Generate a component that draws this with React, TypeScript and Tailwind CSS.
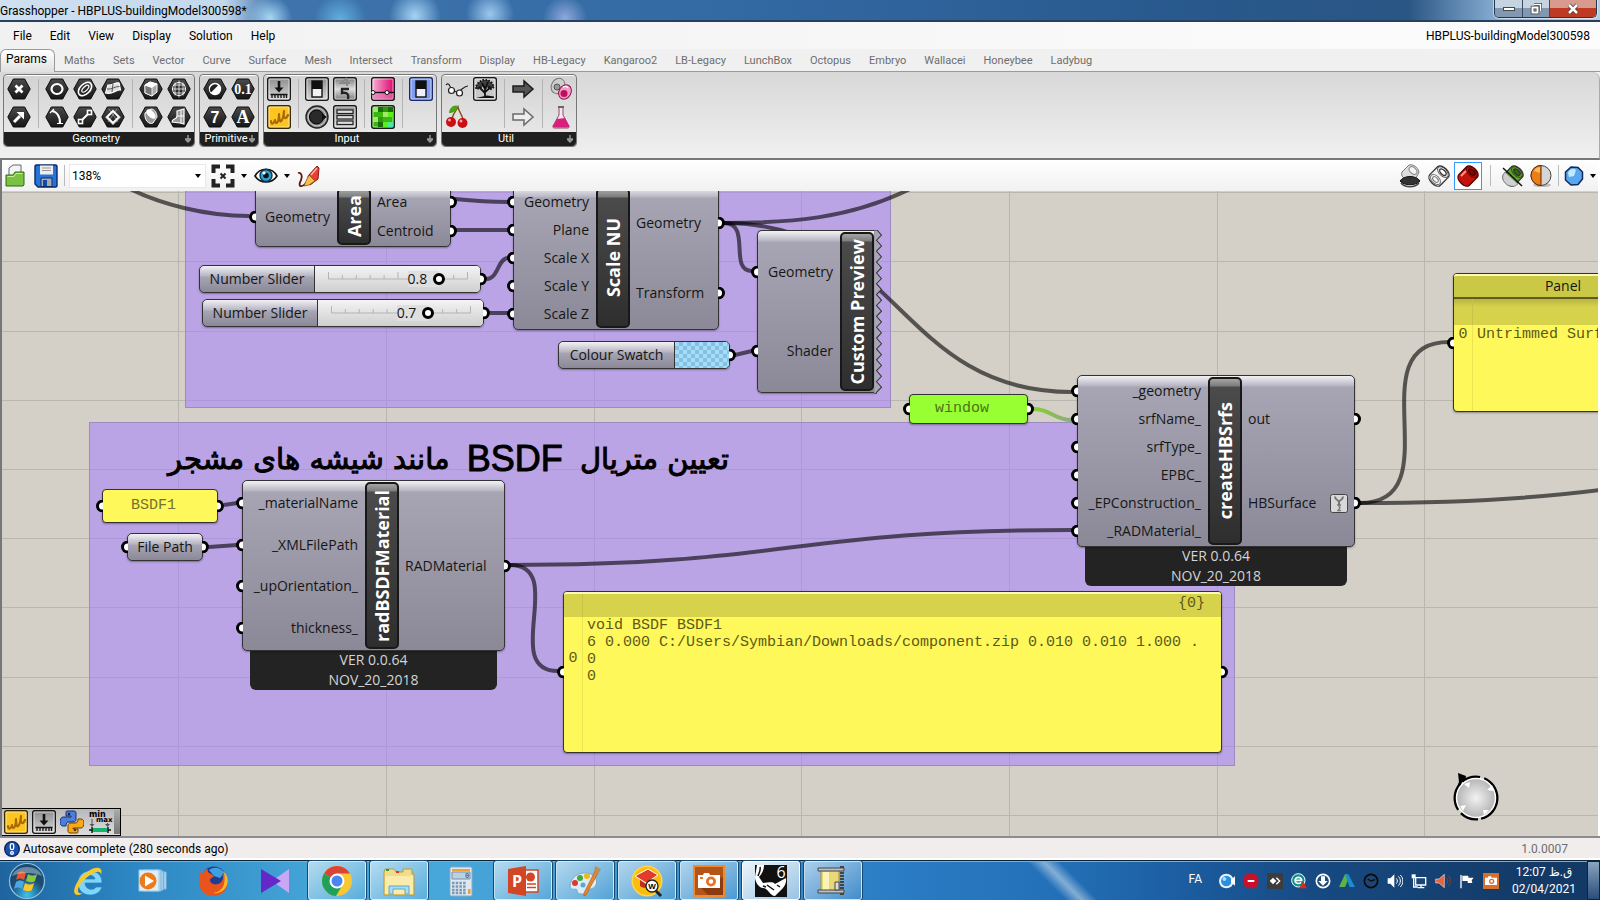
import { ReactNode } from "react";
import clsx from "clsx";

const TABS = [
  "Maths",
  "Sets",
  "Vector",
  "Curve",
  "Surface",
  "Mesh",
  "Intersect",
  "Transform",
  "Display",
  "HB-Legacy",
  "Kangaroo2",
  "LB-Legacy",
  "LunchBox",
  "Octopus",
  "Embryo",
  "Wallacei",
  "Honeybee",
  "Ladybug",
];

const GRID_X = [178, 386, 594, 801, 1009, 1217, 1424];
const GRID_Y = [1, 70, 140, 209, 278, 347, 416, 486, 555, 624];

const WIRES = [
  "M128 -3C160 13 205 25 249 25",
  "M455 8C475 10 485 11 508 11",
  "M456 39H508",
  "M487 88C498 88 498 67 508 67",
  "M490 122H508",
  "M735 164L752 160",
  "M724 32C790 32 850 28 912 -3",
  "M724 32C752 32 728 80 752 80",
  "M724 32C898 32 898 201 1072 201",
  "M1360 312C1454 312 1355 151 1449 151",
  "M1360 312C1450 312 1530 308 1600 299",
  "M224 314L237 312",
  "M209 356L237 354",
  "M510 374C790 374 790 339 1072 339",
  "M510 374C568 374 500 480 558 480",
];

type IconProps = {
  children: ReactNode;
  size?: string;
};

function Svg({ children, size = "size-6" }: IconProps) {
  return (
    <svg viewBox="0 0 24 24" className={clsx(size, "shrink-0")} aria-hidden>
      {children}
    </svg>
  );
}

function Hex({ children }: { children: ReactNode }) {
  return (
    <Svg>
      <path
        d="M.8 12 6.3 2h11.4l5.5 10-5.5 10H6.3z"
        fill="url(#hex)"
        stroke="#0c0c0c"
        strokeWidth="1"
      />
      <g fill="none" stroke="#fff" strokeWidth="1.6">
        {children}
      </g>
    </Svg>
  );
}

function Tile({
  children,
  fill = "url(#silver)",
  stroke = "#1a1a1a",
}: {
  children: ReactNode;
  fill?: string;
  stroke?: string;
}) {
  return (
    <Svg>
      <rect
        x=".7"
        y=".7"
        width="22.6"
        height="22.6"
        rx="2"
        fill={fill}
        stroke={stroke}
        strokeWidth="1.4"
      />
      <rect
        x="2"
        y="2"
        width="20"
        height="20"
        rx="1"
        fill="none"
        stroke="#fff"
        strokeOpacity=".6"
      />
      {children}
    </Svg>
  );
}

function HexText({ text, size }: { text: string; size: number }) {
  return (
    <text
      x="12"
      y={12 + size * 0.36}
      fontSize={size}
      fontFamily="Liberation Serif, serif"
      fontWeight="700"
      textAnchor="middle"
      fill="#fff"
      stroke="none"
    >
      {text}
    </text>
  );
}

const sketchTile = (
  <Tile fill="#fdc51d" stroke="#3a2c00">
    <path
      d="M4 16c0 4 3 3 4-1 0 5 4 4 4-6 0 12 4 8 5-3-1 8 2 9 4 4"
      fill="none"
      stroke="#a86a08"
      strokeWidth="2.200"
      strokeLinejoin="round"
      strokeLinecap="round"
    />
  </Tile>
);

const importTile = (
  <Tile>
    <path d="M12 4v8" stroke="#111" strokeWidth="2.6" />
    <path d="M7.500 10.500h9L12 15.500z" fill="#111" />
    <path
      d="M3.500 17.500h17M5 18v3M8 18v3M11 18v3M14 18v3M17 18v3M19.500 18v3"
      stroke="#111"
      strokeWidth="1.300"
    />
  </Tile>
);

// null leaves the slot empty, "|" starts a new block of columns
type Cell = ReactNode | null;
type Column = [string, Cell, string, Cell] | "|";

const geometry: Column[] = [
  [
    "Point",
    <Hex>
      <path d="m8.500 8.500 7 7m0-7-7 7" strokeWidth="2.800" />
    </Hex>,
    "Vector",
    <Hex>
      <path d="m7 17 6-6" strokeWidth="3" />
      <path d="M9.500 7H17v7.500z" fill="#fff" stroke="none" />
    </Hex>,
  ],
  "|",
  [
    "Circle",
    <Hex>
      <ellipse cx="12" cy="12" rx="5.500" ry="5" strokeWidth="2.200" />
    </Hex>,
    "Circular Arc",
    <Hex>
      <path d="M7 6c6 1 8 7 8 12" strokeWidth="2.200" />
      <path d="m5 8 4-4M12 18.500h6" strokeWidth="1.200" />
    </Hex>,
  ],
  [
    "Curve",
    <Hex>
      <g transform="rotate(-45 12 12)">
        <ellipse cx="12" cy="12" rx="8" ry="5" />
        <ellipse cx="12.500" cy="12" rx="4.500" ry="2" strokeWidth="1.200" />
      </g>
    </Hex>,
    "Line",
    <Hex>
      <path d="m8 16 8-8" strokeWidth="2" />
      <rect x="5.500" y="14.500" width="4" height="4" fill="#222" />
      <rect x="14.500" y="5.500" width="4" height="4" fill="#222" />
    </Hex>,
  ],
  [
    "Surface",
    <Hex>
      <path d="M4.500 16 7 8c4 1 7-3 11-2l1.500 7c-4-1-8 5-15 3z" fill="#ddd" strokeWidth="1.200" />
      <path d="m12 6.500-1 8.500M6 12c5 1 8-3 12.500-2.500" stroke="#555" strokeWidth="1" />
    </Hex>,
    "Twisted Box",
    <Hex>
      <path d="m12 6 6 6-6 6-6-6z" strokeWidth="2" />
      <path d="m8 4 9 13M16 4 7 17M4 12l8 8M20 12l-8 8" strokeWidth=".6" strokeOpacity=".7" />
    </Hex>,
  ],
  "|",
  [
    "Box",
    <Hex>
      <path d="m6 8 5-3 7 2v8l-5 4-7-3z" fill="#aaa" strokeWidth="1" />
      <path d="m6 8 7 2.500v8.500l-7-3z" fill="#777" strokeWidth=".8" />
      <path d="m6 8 5-3 7 2-5 3.500z" fill="#fff" strokeWidth=".8" />
    </Hex>,
    "Brep",
    <Hex>
      <path d="m6 8 6-4c4 0 6 5 6 8l-4 6c-4 2-9-3-8-10z" fill="#999" strokeWidth="1" />
      <ellipse cx="12" cy="9" rx="3" ry="5.500" fill="#fff" transform="rotate(-45 12 9)" strokeWidth=".6" />
    </Hex>,
  ],
  [
    "Mesh",
    <Hex>
      <circle cx="12" cy="12" r="6.500" strokeWidth="1" />
      <path
        d="M12 3.500v17M5 12h14M8 5.500v13M16 5.500v13M6 8h12M6 16h12"
        strokeWidth=".9"
        strokeOpacity=".85"
      />
    </Hex>,
    "Brep",
    <Hex>
      <path d="m10 6 7-2v15l-4-1-8-1c0-4 5-2 5-6z" fill="#999" strokeWidth="1.200" />
      <path d="M14 5v13M10 11h7" strokeWidth="1" />
    </Hex>,
  ],
];

const primitive: Column[] = [
  [
    "Boolean",
    <Hex>
      <circle cx="12" cy="12" r="5.500" fill="#fff" strokeWidth="1.400" />
      <path d="M8 15.500A5 5 0 0 1 15 8.500z" fill="#222" stroke="none" />
    </Hex>,
    "Integer",
    <Hex>
      <text
        x="12"
        y="18"
        fontSize="16"
        fontFamily="Liberation Sans, sans-serif"
        fontWeight="700"
        textAnchor="middle"
        fill="#fff"
        stroke="none"
      >
        7
      </text>
    </Hex>,
  ],
  [
    "Number",
    <Hex>
      <HexText text="0.1" size={14} />
    </Hex>,
    "Text",
    <Hex>
      <HexText text="A" size={18} />
    </Hex>,
  ],
];

const inputs: Column[] = [
  ["Import", importTile, "Sketch", sketchTile],
  "|",
  [
    "Button",
    <Tile>
      <rect x="7" y="4" width="10" height="16" fill="#f2f2f2" stroke="#111" strokeWidth="1.400" />
      <rect x="7" y="4" width="10" height="8" fill="#111" />
    </Tile>,
    "Control Knob",
    <Svg>
      <circle cx="12" cy="12" r="11" fill="#8a8a8a" stroke="#222" strokeWidth="1.400" />
      <circle cx="12" cy="12" r="9" fill="none" stroke="#ccc" strokeWidth="1" />
      <circle cx="11.500" cy="12" r="7" fill="#2a2a2a" stroke="#000" />
      <path d="m17 8.500 5 3.500-5 3.500z" fill="#111" />
    </Svg>,
  ],
  [
    "Digit Scroller",
    <Tile fill="url(#scroll)">
      <path d="M14 1 8 6h9M14 1v8" fill="none" stroke="#888" strokeWidth="2" />
      <path d="M16 12H9v4c6-1 7 2 6 6" fill="none" stroke="#222" strokeWidth="2.400" />
    </Tile>,
    "Value List",
    <Tile>
      {[5, 10.5, 16].map((y) => (
        <rect
          key={y}
          x="4"
          y={y}
          width="16"
          height="3.500"
          fill="#ddd"
          stroke="#222"
          strokeWidth="1.200"
        />
      ))}
    </Tile>,
  ],
  "|",
  [
    "Gradient",
    <Tile fill="url(#pink)">
      <path d="M1 15.500h22" stroke="#111" strokeWidth="1.400" />
      <rect x="2" y="16.500" width="20" height="6" fill="#e67ab4" opacity=".6" />
      <circle cx="2" cy="15.500" r="2" fill="#fff" stroke="#111" />
      <circle cx="16" cy="15.500" r="2" fill="#fff" stroke="#111" />
    </Tile>,
    "Image Sampler",
    <Tile fill="#3bb80f">
      <path d="M2 2h5v5H2zM12 7h5v5h-5zM2 12h5v5H2z" fill="#a4e86a" />
      <path d="M7 2h5v5H7zM17 2h5v5h-5zM7 17h5v5H7z" fill="#1a6e08" />
      <path d="M12 2h5v5h-5zM7 12h5v5H7z" fill="#2c9a0a" />
      <path d="M17 7h5v5h-5zM12 17h5v5h-5z" fill="#59f01a" />
      <path d="M17 17h5v5h-5z" fill="#4be8a4" />
    </Tile>,
  ],
  "|",
  [
    "Colour Swatch",
    <Tile fill="#7d9cf0" stroke="#1b2a66">
      <rect x="7" y="4" width="10" height="16" fill="#eef" stroke="#111" strokeWidth="1.400" />
      <rect x="7" y="4" width="10" height="8" fill="#111" />
    </Tile>,
    "",
    null,
  ],
];

const util: Column[] = [
  [
    "Jump",
    <Svg>
      <g fill="#fff" stroke="#222" strokeWidth="1.200">
        <path d="M1 8c2-3 4 0 5 4M14 14c3-1 5-5 9-5M9 14l3 1" fill="none" />
        <circle cx="6.500" cy="13.500" r="3" />
        <circle cx="14.500" cy="16" r="3" />
      </g>
    </Svg>,
    "Cherry Picker",
    <Svg>
      <path d="M7 14C8 8 12 5 13 2c1 5 4 8 5 12" fill="none" stroke="#7a4a12" strokeWidth="1.300" />
      <path d="M13 1C9-1 4 3 4 8c5 0 8-2 9-7z" fill="#47a51a" />
      <circle cx="6" cy="17" r="5" fill="#c90f14" />
      <circle cx="17.500" cy="18" r="5" fill="#c90f14" />
      <circle cx="4.500" cy="15" r="1.500" fill="#ff9c9c" />
      <circle cx="16" cy="16" r="1.500" fill="#ff9c9c" />
    </Svg>,
  ],
  [
    "Tree Statistics",
    <Tile fill="#c9c9c9">
      <path d="M3 21h18v-1.500l-7-1z" fill="#111" />
      <path d="M12 21v-9M12 16 6 10M12 15l6-5M12 12 9 6M12 12l3-7" stroke="#111" strokeWidth="1.800" />
      <path
        d="m3 9 3-4 4-2h5l4 3 2 4-3 2-2-2-3 1-3-2-3 2-4 1z"
        fill="#111"
        fillOpacity=".75"
        stroke="#111"
        strokeWidth="2"
        strokeDasharray="1.500 1.500"
      />
    </Tile>,
    "",
    null,
  ],
  "|",
  [
    "Relay",
    <Svg>
      <path d="M2 9h11V4l9 8-9 8v-5H2z" fill="#555" stroke="#1c1c1c" strokeWidth="1.500" />
    </Svg>,
    "Data",
    <Svg>
      <path d="M2 9h11V4l9 8-9 8v-5H2z" fill="#eee" stroke="#6a6a6a" strokeWidth="1.500" />
    </Svg>,
  ],
  "|",
  [
    "Suirify",
    <Svg>
      <ellipse cx="9" cy="9" rx="6.500" ry="8" transform="rotate(30 9 9)" fill="#cfcfcf" stroke="#777" />
      <circle cx="8" cy="10" r="3" fill="#999" stroke="#555" />
      <ellipse cx="16" cy="15" rx="6" ry="7.500" transform="rotate(30 16 15)" fill="#f09cc4" stroke="#8b1350" />
      <circle cx="15" cy="16.500" r="3.500" fill="#c00d5e" />
      <path d="M14 10c2-1 4-1 5 1" stroke="#fff" strokeWidth="1.400" fill="none" />
    </Svg>,
    "Galapagos",
    <Svg>
      <path d="M10 2h4v8l6 11c.5 1.500-.5 2-1.500 2h-13C4 23 3.500 22 4 21l6-11z" fill="#f6e6ee" stroke="#8d4a6b" />
      <path d="m8 14 8-1 4 8c.3 1-.3 1.400-1 1.400H5c-.8 0-1.300-.5-1-1.400z" fill="#d81f7d" />
      <path d="M9 2h6" stroke="#666" strokeWidth="2" />
    </Svg>,
  ],
];

function RibbonGroup({ title, columns }: { title: string; columns: Column[] }) {
  return (
    <section className="flex flex-col rounded-sm border border-[#777] bg-linear-to-b from-[#d2d2d2] to-[#ececec] shadow-[inset_0_1px_0_#fff]">
      <div className="flex flex-1 px-px">
        {columns.map((column, index) =>
          column === "|" ? (
            <div key={index} className="flex w-2.5 justify-center py-1">
              <div className="w-px bg-[#b4b4b4]" />
            </div>
          ) : (
            <div key={index} className="flex w-7 flex-col items-center">
              {column[1] && (
                <button type="button" aria-label={column[0]} className="flex h-7 items-center">
                  {column[1]}
                </button>
              )}
              {column[3] && (
                <button type="button" aria-label={column[2]} className="flex h-7 items-center">
                  {column[3]}
                </button>
              )}
            </div>
          )
        )}
      </div>
      <div className="flex h-3.5 items-center rounded-b-sm bg-[#1f1f1f] pr-0.5 pl-1 text-[11px] leading-3 text-white">
        <span className="flex-1 text-center">{title}</span>
        <svg viewBox="0 0 8 8" className="size-2" aria-hidden>
          <path d="M4 0v7M1.500 4.500 4 7l2.500-2.500M1 4h6" fill="none" stroke="#9a9a9a" strokeWidth="1.400" />
        </svg>
      </div>
    </section>
  );
}

function Port({ side }: { side: "in" | "out" }) {
  return (
    <span
      className={clsx(
        "absolute top-1/2 h-[13px] w-[7px] -translate-y-1/2 border-black bg-white",
        side === "in"
          ? "-left-[7px] rounded-l-full border-y-[3px] border-l-[3px]"
          : "-right-[7px] rounded-r-full border-y-[3px] border-r-[3px]"
      )}
    />
  );
}

const METAL =
  "border border-[#333] bg-[linear-gradient(#f2f2f4_0,#b6b5c3_10px,#a7a5b3_11px,#8b8997_100%)]";

type NodeProps = {
  name: string;
  inputs: string[];
  outputs: string[];
  place: string;
  inputWidth: string;
  footer?: boolean;
  ragged?: boolean;
  branch?: string;
};

function Node({ name, inputs, outputs, place, inputWidth, footer, ragged, branch }: NodeProps) {
  return (
    <article className={clsx("absolute", place)}>
      {footer && (
        <div className="absolute inset-x-2 top-full -mt-px flex flex-col items-center rounded-b-md bg-[#232323] text-[14px] leading-5 text-[#d4d4d4]">
          <span>VER 0.0.64</span>
          <span>NOV_20_2018</span>
        </div>
      )}
      <div
        className={clsx(
          "relative flex size-full rounded-[5px] py-px shadow-[0_1px_2px_rgba(0,0,0,.35)]",
          METAL,
          ragged && "rounded-r-none border-r-0"
        )}
      >
        <div className={clsx("flex flex-col", inputWidth)}>
          {inputs.map((label) => (
            <div key={label} className="relative flex flex-1 items-center justify-end pr-[7px]">
              <Port side="in" />
              {label}
            </div>
          ))}
        </div>
        <div className="flex w-[34px] items-center justify-center rounded-[5px] border-2 border-[#181818] bg-[linear-gradient(#a5a5a5_0,#7c7c7c_7px,#4b4b4b_8px,#2e2e2e_100%)]">
          <h2 className="rotate-180 text-[18px] leading-6 font-bold whitespace-nowrap text-white [writing-mode:vertical-rl]">
            {name}
          </h2>
        </div>
        <div className="flex flex-1 flex-col">
          {outputs.map((label) => (
            <div key={label} className="relative flex flex-1 items-center justify-between px-1.5">
              <Port side="out" />
              {label}
              {label === branch && (
                <svg viewBox="0 0 18 19" className="h-[19px] w-[18px]" aria-hidden>
                  <rect x=".5" y=".5" width="17" height="18" rx="2" fill="#d8d8d8" stroke="#444" />
                  <path d="M5 2.500c0 4 4 3 4 6 0-3 4-2 4-6M9 8v3" fill="none" stroke="#777" strokeWidth="2" />
                  <path d="M11 11H8l2 2.500-2 3h3" fill="none" stroke="#777" strokeWidth="1.300" />
                </svg>
              )}
            </div>
          ))}
        </div>
        {ragged && (
          <svg
            viewBox="0 0 8 160"
            preserveAspectRatio="none"
            className="absolute -top-px -right-[7px] h-[164px] w-2"
            aria-hidden
          >
            <path
              d={`M0 0H3${Array.from({ length: 15 })
                .map((_, i) => `L7.500 ${i * 10.6 + 5}L2.500 ${i * 10.6 + 10}`)
                .join("")}L2 160H0z`}
              fill="#a9a7b5"
              stroke="#333"
              strokeWidth="1"
            />
            <path d="M0 1v158" stroke="#9a98a6" strokeWidth="2" />
          </svg>
        )}
      </div>
    </article>
  );
}

function NumberSlider({ value, place }: { value: number; place: string }) {
  return (
    <label
      className={clsx(
        "absolute flex h-7 w-[282px] rounded-[5px] shadow-[0_1px_2px_rgba(0,0,0,.35)]",
        METAL,
        place
      )}
    >
      <span className="flex w-[115px] items-center justify-center border-r border-[#333]">
        Number Slider
      </span>
      <span className="relative flex flex-1 items-center rounded-r bg-linear-to-b from-[#f4f4f4] to-[#cfcfcf] pl-[7px]">
        <svg viewBox="0 0 151 26" className="absolute h-[26px] w-[151px]" aria-hidden>
          <path
            d="M6.500 6v7h139V6M20.400 9v4M34.300 9v4M48.200 9v4M62.100 9v4M76 6v7M89.900 9v4M103.800 9v4M117.700 9v4M131.600 9v4"
            fill="none"
            stroke="#b4b4b4"
          />
        </svg>
        <span className="relative flex w-[151px] items-center">
          <span
            className="absolute bg-[#dfdfdf] pr-3 leading-4"
            style={{ right: (1 - value) * 139 + 6 }}
          >
            {value}
          </span>
          <input
            type="range"
            min={0}
            max={1}
            step={0.1}
            defaultValue={value}
            className="relative h-4 w-full appearance-none bg-transparent [&::-webkit-slider-thumb]:size-3 [&::-webkit-slider-thumb]:appearance-none [&::-webkit-slider-thumb]:rounded-full [&::-webkit-slider-thumb]:border-3 [&::-webkit-slider-thumb]:border-black [&::-webkit-slider-thumb]:bg-white"
          />
        </span>
      </span>
      <Port side="out" />
    </label>
  );
}

function Canvas() {
  return (
    <main className="relative min-h-[645px] flex-1 overflow-hidden border-x-2 border-l-[#77767a] border-r-white bg-[#d4d0c8] font-['Open_Sans',sans-serif] text-[14px] leading-5 text-[#161616]">
      <div className="absolute inset-y-0 -left-0.5 w-[1600px]">
        <svg className="absolute inset-0 size-full" aria-hidden>
          {GRID_X.map((x) => (
            <path key={x} d={`M${x + 0.5} 0V2000`} stroke="#b9b6ae" />
          ))}
          {GRID_Y.map((y) => (
            <path key={y} d={`M0 ${y + 0.5}H1600`} stroke="#b9b6ae" />
          ))}
        </svg>
        <div className="absolute -top-1 left-[185px] h-[221px] w-[706px] border border-[#9c8bc0] bg-[#a680ff]/55" />
        <div className="absolute top-[231px] left-[89px] h-[344px] w-[1146px] border border-[#9c8bc0] bg-[#a680ff]/55" />
        <svg className="absolute inset-0 size-full" fill="none" aria-hidden>
          <defs>
            <linearGradient id="greenWire">
              <stop offset="0" stopColor="#86cf2c" />
              <stop offset="1" stopColor="#8fa983" />
            </linearGradient>
          </defs>
          {WIRES.map((d) => (
            <path key={d} d={d} stroke="#000" strokeOpacity=".6" strokeWidth="4" />
          ))}
          <path d="M1033 218C1052 218 1053 229 1072 229" stroke="url(#greenWire)" strokeWidth="4" />
        </svg>

        <h1
          dir="rtl"
          className="absolute top-[248px] left-[168px] flex w-[561px] items-center justify-between font-['DejaVu_Sans',sans-serif] text-[29px] leading-10 whitespace-nowrap text-black [-webkit-text-stroke:1px_black]"
        >
          <span>تعیین متریال</span>
          <span className="font-['Liberation_Sans',sans-serif] text-[36px]">BSDF</span>
          <span>مانند شیشه های مشجر</span>
        </h1>

        <Node
          name="Area"
          inputs={["Geometry"]}
          outputs={["Area", "Centroid"]}
          place="-top-[5px] left-[255px] h-[61px] w-[196px]"
          inputWidth="w-[81px]"
        />
        <Node
          name="Scale NU"
          inputs={["Geometry", "Plane", "Scale X", "Scale Y", "Scale Z"]}
          outputs={["Geometry", "Transform"]}
          place="-top-[5px] left-[513px] h-[144px] w-[206px]"
          inputWidth="w-[82px]"
        />
        <NumberSlider value={0.8} place="top-[74px] left-[199px]" />
        <NumberSlider value={0.7} place="top-[108px] left-[202px]" />
        <div
          className={clsx(
            "absolute top-[150px] left-[558px] flex h-7 w-[172px] rounded-[5px] shadow-[0_1px_2px_rgba(0,0,0,.35)]",
            METAL
          )}
        >
          <span className="flex w-[116px] items-center justify-center border-r border-[#333]">
            Colour Swatch
          </span>
          <span className="flex-1 rounded-r bg-[repeating-conic-gradient(#86c0e0_0_25%,#a4dcfa_0_50%)] bg-size-[8px_8px]" />
          <Port side="out" />
        </div>
        <Node
          name="Custom Preview"
          inputs={["Geometry", "Shader"]}
          outputs={[]}
          place="top-[39px] left-[757px] h-[163px] w-[118px]"
          inputWidth="w-[82px]"
          ragged
        />
        <div className="absolute top-[203px] left-[909px] h-[30px] w-[119px] rounded-[4px] border border-[#333] bg-[#98ff32] pt-0.5 pl-[25px] font-['Liberation_Mono',monospace] text-[15px] leading-6 text-[#4c7418] shadow-[0_1px_2px_rgba(0,0,0,.35)]">
          <Port side="in" />
          window
          <Port side="out" />
        </div>
        <div className="absolute top-[298px] left-[102px] h-[34px] w-[116px] rounded-[4px] border border-[#333] bg-[#fff85a] pt-0.5 pl-7 font-['Liberation_Mono',monospace] text-[15px] leading-7 text-[#75712c] shadow-[0_1px_2px_rgba(0,0,0,.35)]">
          <Port side="in" />
          BSDF1
          <Port side="out" />
        </div>
        <div
          className={clsx(
            "absolute top-[342px] left-[127px] flex h-7 w-[76px] items-center justify-center rounded-[5px] shadow-[0_1px_2px_rgba(0,0,0,.35)]",
            METAL
          )}
        >
          <Port side="in" />
          File Path
          <Port side="out" />
        </div>
        <Node
          name="radBSDFMaterial"
          inputs={["_materialName", "_XMLFilePath", "_upOrientation_", "thickness_"]}
          outputs={["RADMaterial"]}
          place="top-[289px] left-[242px] h-[171px] w-[263px]"
          inputWidth="w-[122px]"
          footer
        />

        <section className="absolute top-[400px] left-[563px] flex h-[162px] w-[659px] flex-col rounded-[4px] border border-[#333] bg-[#fff85a] font-['Liberation_Mono',monospace] text-[15px] leading-[17px] text-[#5c5818] shadow-[0_1px_2px_rgba(0,0,0,.35)]">
          <Port side="in" />
          <Port side="out" />
          <div className="flex h-[25px] rounded-t-[3px] border-t-2 border-[#fbf9b8] bg-[#d7d24c]">
            <div className="w-[19px] border-r border-[#c9c447]" />
            <div className="flex-1 pt-px pr-4 text-right">{"{0}"}</div>
          </div>
          <div className="flex flex-1">
            <div className="flex w-[19px] flex-col justify-start border-r border-[#ece551] pt-[33px] text-center">
              0
            </div>
            <pre className="pl-1 font-[inherit] leading-[17px]">
              {"void BSDF BSDF1\n6 0.000 C:/Users/Symbian/Downloads/component.zip 0.010 0.010 1.000 .\n0\n0"}
            </pre>
          </div>
        </section>

        <Node
          name="createHBSrfs"
          inputs={["_geometry", "srfName_", "srfType_", "EPBC_", "_EPConstruction_", "_RADMaterial_"]}
          outputs={["out", "HBSurface"]}
          place="top-[184px] left-[1077px] h-[172px] w-[278px]"
          inputWidth="w-[130px]"
          branch="HBSurface"
          footer
        />

        <section className="absolute top-[82px] left-[1453px] flex h-[139px] w-[220px] flex-col rounded-[4px] border border-[#333] bg-[#fff85a] shadow-[0_1px_2px_rgba(0,0,0,.35)]">
          <Port side="in" />
          <h2 className="rounded-t-[3px] border-t-2 border-b-2 border-t-[#fbf9b8] border-b-[#5d5b20] bg-[#cbc846] pb-0.5 text-center leading-[19px]">
            Panel
          </h2>
          <div className="flex h-[26px] bg-linear-to-b from-[#b7b340] to-[#d7d24c] to-30%">
            <div className="w-[19px] border-r border-[#c9c447]" />
          </div>
          <div className="flex flex-1 font-['Liberation_Mono',monospace] text-[15px] text-[#5c5818]">
            <div className="w-[19px] border-r border-[#ece551] text-center">0</div>
            <div className="pl-1 whitespace-nowrap">Untrimmed Surface</div>
          </div>
        </section>
      </div>

      <svg viewBox="0 0 52 52" className="absolute right-24 bottom-3 size-[52px]" aria-hidden>
        <circle cx="26" cy="26" r="20.500" fill="none" stroke="#000" strokeWidth="4" strokeDasharray="27 3 18 4" />
        <path d="m8 1 8 3-1 6H9z" />
        <path d="m12 6-3 8" stroke="#000" strokeWidth="3" />
        <circle cx="26" cy="26" r="19.500" fill="url(#dial)" stroke="#fff" strokeWidth="1.500" />
        <path d="m14 12 6-2-1 6zM37 18l5-5 2 6zM10 34l6-1-3 6zM33 38h6l-5 5z" fill="#fff" />
      </svg>

      <div className="absolute bottom-0 left-0 flex h-7 border border-l-0 border-black bg-linear-to-b from-[#b8b8b8] to-[#dcdcdc] pl-0.5">
        <button type="button" aria-label="Sketch" className="flex w-7 items-center">
          {sketchTile}
        </button>
        <button type="button" aria-label="Import" className="flex w-7 items-center">
          {importTile}
        </button>
        <button type="button" aria-label="Python" className="flex w-7 items-center">
          <Svg>
            <path
              d="M7 1h7c1.500 0 2 1 2 2v6c0 2-1 3-3 3H9c-2 0-3 1-3 4H3c-2 0-3-2-3-4s1-5 3-5h8V6H6V3c0-1 0-2 1-2z"
              fill="#4a7fe0"
              stroke="#1b2f66"
            />
            <path
              d="M17 23h-7c-1.500 0-2-1-2-2v-5c0-2 1-3 3-3h4c2 0 3-1 3-4h3c2 0 3 2 3 4s-1 5-3 5h-8v1h5v2c0 1 0 2-1 2z"
              fill="#f9a818"
              stroke="#6b3f00"
            />
            <circle cx="9" cy="4" r="1.200" fill="#0d1f4d" />
            <circle cx="15" cy="20" r="1.200" fill="#5a3200" />
          </Svg>
        </button>
        <button type="button" aria-label="Min max" className="flex w-6 items-center">
          <svg viewBox="0 0 24 24" className="size-6 overflow-visible">
            <text x="1" y="7" fontSize="8" fontWeight="700" fontFamily="DejaVu Sans, sans-serif">
              min
            </text>
            <text x="8" y="12" fontSize="7" fontWeight="700" fontFamily="DejaVu Sans, sans-serif">
              max
            </text>
            <path d="M4 9v6M19.500 13v3" stroke="#555" />
            <path d="M1.500 14h5L4 17zM17 14h5l-2.500 3z" fill="#555" />
            <path d="M4 18h15.500v4H4z" fill="#12b36c" />
            <path d="M4 17v6M20 17v6M1 20h3M20 20h3" stroke="#111" strokeWidth="1.400" />
          </svg>
        </button>
        <div className="my-px ml-0.5 w-1.5 bg-linear-to-b from-[#aaa] to-[#777]" />
      </div>
    </main>
  );
}

function Caret() {
  return <span className="border-x-3 border-t-4 border-x-transparent border-t-black" />;
}

function Roll({ body, hole, line = "#333" }: { body: string; hole: string; line?: string }) {
  return (
    <g stroke={line} strokeWidth="1.300" transform="rotate(45 12 12)">
      <path d="M4.500 6.500v11c0 6 15 6 15 0v-11c0-6-15-6-15 0z" fill={body} />
      <ellipse cx="12" cy="6.500" rx="6.500" ry="3.800" fill={body} strokeWidth=".8" />
      <ellipse cx="12" cy="6.500" rx="4" ry="2.200" fill={hole} />
    </g>
  );
}

function Toolbar() {
  return (
    <div className="flex h-[31px] shrink-0 items-center border-x-2 border-l-[#77767a] border-r-white bg-linear-to-b from-white to-[#f1f1f1] pr-0.5 pl-px">
      <button type="button" aria-label="Open File" className="flex w-6 justify-center">
        <Svg>
          <path d="M6 9V4l4-3h8v13H6z" fill="#f4f4f4" stroke="#666" />
          <path d="M3 22V11h7l2-3h9v13l-1 1z" fill="#7cc242" stroke="#2e6b10" />
          <path d="M4.500 12.500H11l2-3h6.500" stroke="#c9f09c" fill="none" />
        </Svg>
      </button>
      <button type="button" aria-label="Save File" className="ml-[7px] flex w-6 justify-center">
        <Svg>
          <path d="M2 1h20l1 1v20l-1 1H4l-3-3V2z" fill="#2674d9" stroke="#0b2a66" strokeWidth="1.400" />
          <path d="M6 1.500h13v9H6z" fill="#eee" />
          <path d="M8 4h9M8 6.500h9" stroke="#999" />
          <path d="M7 14h11v8.500H7z" fill="#aaa" stroke="#0b2a66" />
          <path d="M9 16h4v6H9z" fill="#0f4aa8" />
        </Svg>
      </button>
      <div className="mx-[5px] ml-[6px] h-[21px] w-px bg-[#bbb]" />
      <label className="flex h-[22px] w-[135px] items-center bg-white pr-1 text-[12px] shadow-[0_0_0_1px_#e6e9ee]">
        <select aria-label="Zoom" className="flex-1 appearance-none pl-0.5 outline-none">
          <option>138%</option>
        </select>
        <Caret />
      </label>
      <button type="button" aria-label="Zoom Extents" className="ml-1.5 flex items-center gap-1.5">
        <Svg>
          <path d="M2.500 9V2.500H9M15 2.500h6.500V9M21.500 15v6.500H15M9 21.500H2.500V15" fill="none" stroke="#222" strokeWidth="4" />
          <path d="m9.500 9.500 5 5m0-5-5 5" stroke="#222" strokeWidth="2" />
        </Svg>
        <Caret />
      </button>
      <button type="button" aria-label="Named Views" className="ml-[7px] flex items-center gap-1.5">
        <Svg>
          <path d="M1 12c5-9 17-9 22 0-5 8-17 8-22 0z" fill="#fff" stroke="#111" strokeWidth="1.600" />
          <circle cx="12" cy="11.500" r="6" fill="#2a9fd0" stroke="#0d3550" strokeWidth="1.400" />
          <circle cx="12" cy="11.500" r="2.800" fill="#111" />
          <circle cx="10" cy="9" r="1.600" fill="#fff" />
        </Svg>
        <Caret />
      </button>
      <button type="button" aria-label="Sketch" className="ml-1.5">
        <Svg>
          <path d="M2 9c3-1 5 3 3 7s-2 7 1 6 4-4 6-3 3 0 4-1" fill="none" stroke="#5c1a10" strokeWidth="1.800" />
          <path d="m12 12 9-10 2 2-1 11-8 6z" fill="#e8402c" stroke="#8b1410" />
          <path d="m10 17 3-6 6 6-6 4-5 1z" fill="#f5c04a" stroke="#7b3a10" strokeWidth=".7" />
          <path d="m15 11 6-7" stroke="#ffb0a4" strokeWidth="1.500" />
        </Svg>
      </button>

      <div className="ml-auto flex items-center">
        <button type="button" aria-label="No preview" className="flex w-7 justify-center">
          <Svg>
            <path d="M4 8 11 1c4-1 9 2 10 7l-3 6H6c-2-1-3-4-2-6z" fill="#ddd" stroke="#777" />
            <ellipse cx="15" cy="6.500" rx="3" ry="4.500" transform="rotate(-45 15 6.500)" fill="#f5f5f5" stroke="#888" />
            <path d="M2 17c4-6 16-6 20 0-4 5-16 5-20 0z" fill="#333" stroke="#111" />
            <path d="M3 19c4 5 14 5 18 0" stroke="#444" strokeWidth="1.500" fill="none" />
          </Svg>
        </button>
        <button type="button" aria-label="Wireframe preview" className="ml-px flex w-7 justify-center">
          <Svg>
            <Roll body="#f6f6f6" hole="#fff" />
            <g transform="rotate(45 12 12)" fill="none" stroke="#777">
              <ellipse cx="12" cy="17" rx="6" ry="3.800" />
              <ellipse cx="12" cy="17" rx="3.500" ry="2" />
            </g>
          </Svg>
        </button>
        <button
          type="button"
          aria-label="Shaded preview"
          aria-pressed="true"
          className="ml-px flex size-7 items-center justify-center border border-[#3399ff] bg-white"
        >
          <Svg>
            <Roll body="#c4130c" hole="#7d0804" line="#4a0603" />
            <path d="m5 12 5-5" stroke="#f59a92" strokeWidth="2" />
          </Svg>
        </button>
        <div className="mx-2 h-[21px] w-px bg-[#bbb]" />
        <button type="button" aria-label="Selected preview" className="flex w-7 justify-center">
          <Svg>
            <Roll body="#58a81a" hole="#2c6c08" />
            <path d="m4 8 13 12-3 2C7 24 0 17 2 11z" fill="#d0d0d0" stroke="#777" strokeWidth=".8" />
            <path d="m2 4 19 18" stroke="#111" strokeWidth="1.500" />
          </Svg>
        </button>
        <button type="button" aria-label="Document preview" className="flex w-7 justify-center">
          <Svg>
            <ellipse cx="13" cy="21" rx="9" ry="2" fill="#bbb" />
            <circle cx="12" cy="11.500" r="10" fill="#d5d5d5" stroke="#444" />
            <path d="M12 1.500a10 10 0 0 0 0 20z" fill="#e8801a" stroke="#6b2300" />
            <path d="M5 7c1-2 3-4 6-4v6z" fill="#ffb85a" />
          </Svg>
        </button>
        <div className="mx-[3px] h-[21px] w-px bg-[#bbb]" />
        <button type="button" aria-label="Preview quality" className="flex items-center gap-1">
          <Svg>
            <path d="m9 3 7 .5 4.500 4.500v7L16 20.500l-7 .5-5.500-5V8z" fill="#57a8f0" stroke="#12285c" strokeWidth="1.500" />
            <path d="M6 9c1-4 6-5 8-3l-2 6-5 1z" fill="#c4e8ff" />
          </Svg>
          <Caret />
        </button>
      </div>
    </div>
  );
}

type Task = {
  name: string;
  look: "plain" | "open" | "active";
  icon: ReactNode;
};

const TASKS: Task[] = [
  {
    name: "Internet Explorer",
    look: "plain",
    icon: (
      <>
        <path d="M29 18H12c0 7 9 8 11 4h6c-2 6-7 8-12 8-7 0-12-5-12-12S10 6 17 6c8 0 12 5 12 12zm-7-4c-1-5-9-5-10 0z" fill="#7fd6fa" stroke="#1e86c9" strokeWidth=".7" />
        <path d="M28 10c3-9-6-9-14-3C4 14-1 25 2 29c2 2 5 1 8-1-8 2-6-7 2-14C20 7 28 4 28 10z" fill="#f8c92a" />
      </>
    ),
  },
  {
    name: "Media Player",
    look: "plain",
    icon: (
      <>
        <path d="M8 5h18v21H8zM26 6h2v19h-2zM29 7h2v17h-2z" fill="#bfe0f5" stroke="#86bbdf" />
        <path d="M4 5h20v21H4z" fill="#dbeefa" stroke="#9cc8e8" />
        <circle cx="13" cy="16" r="8.500" fill="#ef7a1a" />
        <path d="m10 10.500 9 5.500-9 5.500z" fill="#fff" />
      </>
    ),
  },
  {
    name: "Firefox",
    look: "plain",
    icon: (
      <>
        <circle cx="17" cy="14" r="12.500" fill="#1c3f94" />
        <path d="M12 5c5-4 13-2 15 3l-4 5-6-2z" fill="#3fa0e0" />
        <path d="M3 7c1 1 2 1 3 1 1-2 3-4 5-4-1 2 0 4 3 5l3 2c-1 2-4 2-4 4 0 4 6 6 10 3 3-2 4-6 2-10 5 4 6 9 5 13-2 7-8 10-14 10C8 31 2 25 2 17c0-4 1-7 1-10z" fill="#e8541c" />
        <path d="M26 6c5 4 6 11 3 16-3 5-9 7-13 6 6-1 10-4 11-9 1-5 1-9-1-13z" fill="#fbb928" />
      </>
    ),
  },
  {
    name: "KMPlayer",
    look: "plain",
    icon: (
      <>
        <path d="M30 4v24l-17-12z" fill="#c8a8f5" />
        <path d="M2 4v24l20-12z" fill="#6427c8" />
      </>
    ),
  },
  {
    name: "Chrome",
    look: "open",
    icon: (
      <>
        <circle cx="16" cy="16" r="15" fill="#f9c831" />
        <path d="M16 16 3 8.500A15 15 0 0 1 29 8.500H16z" fill="#da4335" />
        <path d="M3 8.500A15 15 0 0 0 15 31l7-12-6-3z" fill="#1fa15b" />
        <circle cx="16" cy="16" r="7.500" fill="#fff" />
        <circle cx="16" cy="16" r="5.500" fill="#4a86ee" />
      </>
    ),
  },
  {
    name: "Explorer",
    look: "open",
    icon: (
      <>
        <path d="M2 4h9l2 3h7V4h9v5h2v21H1V7z" fill="#f2dc88" stroke="#b99b3a" />
        <path d="M2 11h28v18H2z" fill="#faecab" />
        <path d="M3 4h3v2H3z" fill="#2c9a3a" />
        <path d="M13 6h3v2h-3z" fill="#d93a2a" />
        <path d="M6 29v-8h20v8h-4v-5H10v5z" fill="#a8dcf2" stroke="#5fa8cc" />
      </>
    ),
  },
  {
    name: "Calculator",
    look: "plain",
    icon: (
      <>
        <rect x="5" y="2" width="22" height="29" rx="1.500" fill="#dce8f2" stroke="#8fa8c0" />
        <path d="M7 4h18v2H7z" fill="#f0a030" />
        <path d="M7 7h18v7H7z" fill="#bcd0e2" stroke="#7890a8" />
        <text x="20" y="13" fontSize="7" fontFamily="Liberation Mono, monospace" fill="#234">0</text>
        {[18, 21.5, 25, 28].map((y) => (
          <path key={y} d={`M7 ${y}h14`} stroke="#7d98b4" strokeWidth="2.300" strokeDasharray="2.500 1.200" />
        ))}
        <path d="M23 24h2.500v5H23z" fill="#f0a030" />
      </>
    ),
  },
  {
    name: "PowerPoint",
    look: "open",
    icon: (
      <>
        <path d="M18 5h13v22H18z" fill="#fff" stroke="#d24625" strokeWidth="1.500" />
        <circle cx="23.500" cy="12" r="4.500" fill="#d24625" />
        <path d="M20 19h9M20 22.500h9" stroke="#d24625" strokeWidth="1.500" />
        <path d="M1 4 19 1v30L1 28z" fill="#d24625" />
        <text x="10" y="22" fontSize="16" fontWeight="700" fontFamily="Open Sans, sans-serif" textAnchor="middle" fill="#fff">P</text>
      </>
    ),
  },
  {
    name: "Paint",
    look: "open",
    icon: (
      <>
        <path d="M1 22C1 12 10 7 18 8c8 1 11 7 9 12-2 4-5 3-7 5-1 3-3 4-8 4-3 0-4-2-4-4s-7 1-7-3z" fill="#d9ecf8" stroke="#7aa8c8" />
        <circle cx="14" cy="20" r="2.500" fill="#5aa6da" />
        <circle cx="6" cy="18" r="3" fill="#d93a2a" />
        <circle cx="11" cy="13" r="3" fill="#48a83a" />
        <circle cx="18" cy="11" r="3" fill="#f2b81a" />
        <path d="m26 6 3 2-12 22-2 1 0-3z" fill="#e8862a" stroke="#a8540e" strokeWidth=".6" />
        <path d="m26 1 6 3-3 5-4-2z" fill="#b88e5c" />
      </>
    ),
  },
  {
    name: "Word Finder",
    look: "open",
    icon: (
      <>
        <circle cx="16" cy="16" r="15.500" fill="#ffd64a" />
        <circle cx="16" cy="16" r="14" fill="#fbbc0e" />
        <path d="m4 11 13-7 10 6-12 8z" fill="#e23b2e" stroke="#fff" />
        <path d="M9 15v6c3 3 9 2 12-1v-5l-6 4z" fill="#c42a20" />
        <circle cx="21" cy="21" r="6" fill="#fff" stroke="#222" strokeWidth="1.300" />
        <path d="m25 26 5 5" stroke="#222" strokeWidth="3" />
        <text x="21" y="24" fontSize="8" fontWeight="700" fontFamily="Liberation Sans, sans-serif" textAnchor="middle">W</text>
      </>
    ),
  },
  {
    name: "Snapshot",
    look: "open",
    icon: (
      <>
        <path d="M0 0h32v32H0z" fill="#f08a2c" />
        <path d="M2 2h28v28H2z" fill="#b3541a" />
        <path d="m6 21 9 9h15V12z" fill="#8a3c10" />
        <path d="M5 10h5l1-2h5l1 2h10v13H5z" fill="#fff" />
        <circle cx="18" cy="16.500" r="5" fill="#e4732a" />
        <circle cx="18" cy="16.500" r="2.200" fill="#fff" />
        <path d="M7 12h3v2H7z" fill="#e4732a" />
      </>
    ),
  },
  {
    name: "Rhino 6",
    look: "active",
    icon: (
      <>
        <path d="M0 0h32v32H0z" fill="#111" />
        <path d="M2 0h7c0 5-2 9-5 12l4 6c5 0 9-2 12 1l11-6c1 6-3 11-7 14l-4 4c-5 0-7-8-12-8C4 23 0 17 0 12z" fill="#fff" />
        <path d="M5 2c1 3-1 6-2 9M12 20l7 5M8 21l3 1M22 20l3 2" stroke="#111" strokeWidth="1.500" fill="none" />
        <text x="26" y="13" fontSize="16" fontFamily="Open Sans, sans-serif" textAnchor="middle" fill="#fff">6</text>
      </>
    ),
  },
  {
    name: "Archive",
    look: "open",
    icon: (
      <>
        <path d="M4 5h18v21H4z" fill="#e9d878" stroke="#a8923a" />
        <path d="M6 7h6v18H6z" fill="#faf3b4" />
        <path d="M25 1v29" stroke="#444" strokeWidth="4" strokeDasharray="2 1" />
        <path d="M1 3h26v3H1zM1 25h26v3H1z" fill="#b8c2cc" stroke="#444" />
        <path d="M18 17h4v8h-4z" fill="#ddd" stroke="#444" />
      </>
    ),
  },
];

const TRAY: [string, ReactNode][] = [
  [
    "Camera",
    <>
      <circle cx="11" cy="12" r="11" fill="#e8f4fc" />
      <circle cx="11" cy="12" r="8" fill="#2b8fe0" />
      <circle cx="8" cy="9" r="3" fill="#a8dcff" />
      <path d="m18 10 6-5v14l-6-5z" fill="#fff" />
    </>,
  ],
  [
    "Recorder",
    <>
      <rect x="1" y="1" width="22" height="22" rx="8" fill="#c8102a" />
      <path d="M7 12h10" stroke="#fff" strokeWidth="3" />
    </>,
  ],
  [
    "Remote",
    <>
      <path d="M0 0h24v24H0z" fill="#3c3c3c" />
      <path d="m9 7 5 5-5 5-5-5z" fill="#fff" />
      <path d="m14 7 5 5-5 5" stroke="#fff" strokeWidth="2" fill="none" />
    </>,
  ],
  [
    "Security",
    <>
      <circle cx="11" cy="11" r="10" fill="#0d8f8c" stroke="#fff" strokeWidth="1.500" />
      <path d="M6 11h10c0-6-10-6-10 0 0 5 6 6 9 3" fill="none" stroke="#fff" strokeWidth="2.400" />
      <path d="m18 13 6 10H12z" fill="#e0281e" />
    </>,
  ],
  [
    "Downloads",
    <>
      <circle cx="12" cy="12" r="10" fill="#1a4d7c" stroke="#fff" strokeWidth="2.500" />
      <path d="M9 5h6v7h4l-7 7-7-7h4z" fill="#fff" />
    </>,
  ],
  [
    "Autodesk",
    <>
      <path d="M0 21 9 2h4l2 5-6 14z" fill="#5eb346" />
      <path d="M9 2h5l10 19h-8z" fill="#1a8fd0" />
    </>,
  ],
  [
    "Clock",
    <>
      <circle cx="12" cy="12" r="10" fill="#1d4574" stroke="#0a0a0a" strokeWidth="2.500" />
      <path d="m7 9 5 3 6-2" stroke="#0a0a0a" strokeWidth="2" fill="none" />
    </>,
  ],
  [
    "Volume",
    <>
      <path d="M1 8h4l6-6v20l-6-6H1z" fill="#fff" />
      <path d="M14 8c2 2 2 6 0 8M17 5c4 4 4 10 0 14M20 3c5 5 5 13 0 18" stroke="#fff" strokeWidth="1.500" fill="none" />
    </>,
  ],
  [
    "Network",
    <>
      <path d="M7 7h15v11H7z" fill="#1d4574" stroke="#fff" strokeWidth="2" />
      <path d="M10 22h10M15 18v4M4 8v13h6" stroke="#fff" strokeWidth="2" fill="none" />
      <path d="M1 2h6v6H1z" fill="#fff" />
    </>,
  ],
  [
    "Sound Manager",
    <>
      <path d="M1 9h5l8-7v20l-8-7H1z" fill="#e8623a" stroke="#fff" strokeWidth=".8" />
      <path d="M17 7c3 3 3 7 0 10M20 4c4 4 4 12 0 16" stroke="#8a3c30" strokeWidth="1.500" fill="none" />
    </>,
  ],
  [
    "Action Center",
    <>
      <path d="M3 3v20" stroke="#fff" strokeWidth="2" />
      <path d="M5 4h9v3h8l-3 4 1 4h-7v-3H5z" fill="#fff" />
    </>,
  ],
  [
    "Snapshot",
    <>
      <path d="M0 0h24v24H0z" fill="#d8702c" />
      <path d="M3 7h4l1-2h4l1 2h8v11H3z" fill="#fff" />
      <circle cx="13" cy="12.500" r="3" fill="none" stroke="#d8702c" strokeWidth="2" />
    </>,
  ],
];

function Taskbar() {
  return (
    <footer className="flex h-10 shrink-0 items-stretch border-t border-[#0d2438] bg-[linear-gradient(45deg,transparent_65%,#ffffff70_66%,transparent_67%),linear-gradient(90deg,#1f649f_0,#2c86c2_8%,#45a5d8_20%,#47a6da_28%,#3d94d0_42%,#2a7cc4_56%,#2370b8_66%,#1b5da0_74%,#174a83_82%,#133a66_96%)] shadow-[inset_0_1px_0_#6db3dd]">
      <button type="button" aria-label="Start" className="flex w-[60px] items-center pl-2">
        <svg viewBox="0 0 38 38" className="size-[38px]" aria-hidden>
          <circle cx="19" cy="19" r="17.500" fill="url(#orb)" stroke="#8fc4e4" strokeWidth="1.200" />
          <path d="M10 11c3-2 5-2 8 0l-2 7c-3-2-5-2-8 0z" fill="#e8562a" />
          <path d="M20 12c3 2 6 2 9 0l-2 7c-3 2-6 1-9 0z" fill="#8cc63c" />
          <path d="M8 20c3-2 5-2 8 0l-2 7c-3-2-5-2-8 0z" fill="#4aa8e4" />
          <path d="M17 21c3 2 6 2 9 0l-2 7c-3 2-6 1-9 0z" fill="#fbc62a" />
          <path d="M4 14C8 2 30 2 34 14c-8-4-22-4-30 0z" fill="#fff" fillOpacity=".35" />
        </svg>
      </button>
      {TASKS.map(({ name, look, icon }) => (
        <button
          key={name}
          type="button"
          aria-label={name}
          className={clsx(
            "mr-1 flex w-[58px] items-center justify-center rounded-[3px] border",
            look === "plain" && "border-transparent",
            look === "open" &&
              "border-white/60 bg-linear-to-br from-white/60 to-white/10 shadow-[0_0_0_1px_#174a73]",
            look === "active" &&
              "border-white bg-linear-to-br from-white/90 to-white/50 shadow-[0_0_0_1px_#174a73]"
          )}
        >
          <svg viewBox="0 0 32 32" className="size-8 overflow-visible" aria-hidden>
            {icon}
          </svg>
        </button>
      ))}
      <div className="ml-auto flex items-center text-white">
        <span className="mr-[17px] mb-1 text-[12px]">FA</span>
        <div className="flex gap-2">
          {TRAY.map(([name, icon]) => (
            <button key={name} type="button" aria-label={name}>
              <Svg size="size-4">{icon}</Svg>
            </button>
          ))}
        </div>
        <div className="mr-2.5 ml-3 w-[66px] text-center text-[12px] leading-[17px]">
          <div dir="rtl" className="font-['Roboto','DejaVu_Sans',sans-serif]">
            ق.ظ 12:07
          </div>
          <div>02/04/2021</div>
        </div>
        <button
          type="button"
          aria-label="Show desktop"
          className="h-full w-[13px] border border-[#0b2440] bg-linear-to-b from-[#8aa4c0] to-[#2a4d78]"
        />
      </div>
    </footer>
  );
}

export default function App() {
  return (
    <div className="flex min-h-screen flex-col bg-[#f0f0f0] font-['Roboto',sans-serif] text-[12px] leading-4 text-black">
      <svg className="absolute size-0" aria-hidden>
        <defs>
          <linearGradient id="hex" x2="0" y2="1">
            <stop offset="0" stopColor="#4a4a4a" />
            <stop offset="1" stopColor="#161616" />
          </linearGradient>
          <linearGradient id="silver" x2="0" y2="1">
            <stop offset="0" stopColor="#8e8e8e" />
            <stop offset="1" stopColor="#d6d6d6" />
          </linearGradient>
          <linearGradient id="scroll" x2="0" y2="1">
            <stop offset="0" stopColor="#777" />
            <stop offset=".5" stopColor="#ddd" />
            <stop offset="1" stopColor="#777" />
          </linearGradient>
          <linearGradient id="pink">
            <stop offset="0" stopColor="#f7b3d6" />
            <stop offset="1" stopColor="#e0006e" />
          </linearGradient>
          <radialGradient id="dial">
            <stop offset="0" stopColor="#f2f2f2" />
            <stop offset="1" stopColor="#b5b5b5" />
          </radialGradient>
          <radialGradient id="orb" cy=".9">
            <stop offset="0" stopColor="#3cc4ee" />
            <stop offset="1" stopColor="#1b4a72" />
          </radialGradient>
        </defs>
      </svg>

      <header className="flex h-[22px] shrink-0 items-start justify-between border-b-2 border-[#27405e] bg-[radial-gradient(circle_at_270px_18px,#a8d8f4_0,transparent_22px),radial-gradient(circle_at_340px_20px,#62b0e0_0,transparent_26px),radial-gradient(circle_at_415px_16px,#a4d4f4_0,transparent_26px),radial-gradient(circle_at_490px_14px,#9cc8ee_0,transparent_24px),radial-gradient(circle_at_565px_18px,#8fa8dc_0,transparent_22px),linear-gradient(90deg,#cfe0f0_0,#c3d8ec_14%,#3f74ac_17%,#336aa4_45%,#28588c_75%,#2a5684_88%,#8fb4d8_94%,#b8cce0_100%)]">
        <h1 className="pt-[3px] text-[12px]">Grasshopper - HBPLUS-buildingModel300598*</h1>
        <div className="mr-[3px] flex h-[18px] w-[103px] overflow-hidden rounded-b-[5px] border border-t-0 border-[#26364a] shadow-[0_0_0_1px_#ffffff80]">
          <button
            type="button"
            aria-label="Minimize"
            className="flex w-7 items-center justify-center border-r border-[#3a4a5e] bg-linear-to-b from-[#c6d4e2] from-50% to-[#8298b0] to-50%"
          >
            <span className="h-1 w-3 border border-[#44484f] bg-white" />
          </button>
          <button
            type="button"
            aria-label="Restore"
            className="flex w-[27px] items-center justify-center border-r border-[#3a4a5e] bg-linear-to-b from-[#c6d4e2] from-50% to-[#8298b0] to-50%"
          >
            <svg viewBox="0 0 12 12" className="size-3" aria-hidden>
              <path d="M4 1.500h6.500V8" fill="none" stroke="#444" strokeWidth="3" />
              <path d="M4 1.500h6.500V8" fill="none" stroke="#fff" strokeWidth="1.500" />
              <path d="M2.500 4.500h5v5h-5z" fill="none" stroke="#444" strokeWidth="3.500" />
              <path d="M2.500 4.500h5v5h-5z" fill="none" stroke="#fff" strokeWidth="2" />
            </svg>
          </button>
          <button
            type="button"
            aria-label="Close"
            className="flex flex-1 items-center justify-center bg-linear-to-b from-[#d99a8e] from-45% to-[#bf3a22] to-50%"
          >
            <svg viewBox="0 0 12 12" className="size-3" aria-hidden>
              <path d="m2 2 8 8m0-8-8 8" stroke="#4a3a3a" strokeWidth="4" />
              <path d="m2 2 8 8m0-8-8 8" stroke="#fff" strokeWidth="2.500" />
            </svg>
          </button>
        </div>
      </header>

      <nav className="flex h-[27px] shrink-0 items-center justify-between bg-linear-to-r from-[#f1f1f1] to-[#fcfcfc] pr-2.5 pl-[13px]">
        <div className="flex gap-[18px]">
          {["File", "Edit", "View", "Display", "Solution", "Help"].map((item) => (
            <button key={item} type="button">
              {item}
            </button>
          ))}
        </div>
        <span>HBPLUS-buildingModel300598</span>
      </nav>

      <div className="flex h-[23px] shrink-0 items-end border-b border-[#9a9a9a] text-[11px] text-[#6e6e6e]">
        <button
          type="button"
          className="-mb-px h-[23px] w-[55px] rounded-t-md border border-b-0 border-[#9a9a9a] bg-linear-to-b from-white to-[#e0e0e0] pr-0.5 pb-1 text-[12px] text-black"
        >
          Params
        </button>
        {TABS.map((tab) => (
          <button key={tab} type="button" className="h-5 px-[9px]">
            {tab}
          </button>
        ))}
      </div>

      <div className="flex h-[88px] shrink-0 gap-1 rounded-tr-lg border-r border-b-2 border-r-[#aaa] border-b-[#77767a] bg-linear-to-b from-[#d8d8d8] to-[#f0f0f0] pt-0.5 pb-[11px] pl-[3px]">
        <RibbonGroup title="Geometry" columns={geometry} />
        <RibbonGroup title="Primitive" columns={primitive} />
        <RibbonGroup title="Input" columns={inputs} />
        <RibbonGroup title="Util" columns={util} />
      </div>

      <Toolbar />
      <Canvas />

      <div className="flex h-6 shrink-0 items-center justify-between border-t-2 border-b-2 border-t-[#8c8c90] border-b-white bg-[#f1edec] pt-0.5 pr-8 pl-1">
        <div className="flex items-center gap-[3px]">
          <Svg size="size-4">
            <circle cx="12" cy="12" r="11" fill="#1b4fae" stroke="#0b2458" strokeWidth="2" />
            <rect x="9.500" y="4" width="5" height="9" rx="2.500" fill="#1b4fae" stroke="#fff" strokeWidth="2" />
            <circle cx="12" cy="18" r="2" fill="none" stroke="#fff" strokeWidth="2" />
          </Svg>
          Autosave complete (280 seconds ago)
        </div>
        <span className="text-[#6e6e6e]">1.0.0007</span>
      </div>

      <Taskbar />
    </div>
  );
}
